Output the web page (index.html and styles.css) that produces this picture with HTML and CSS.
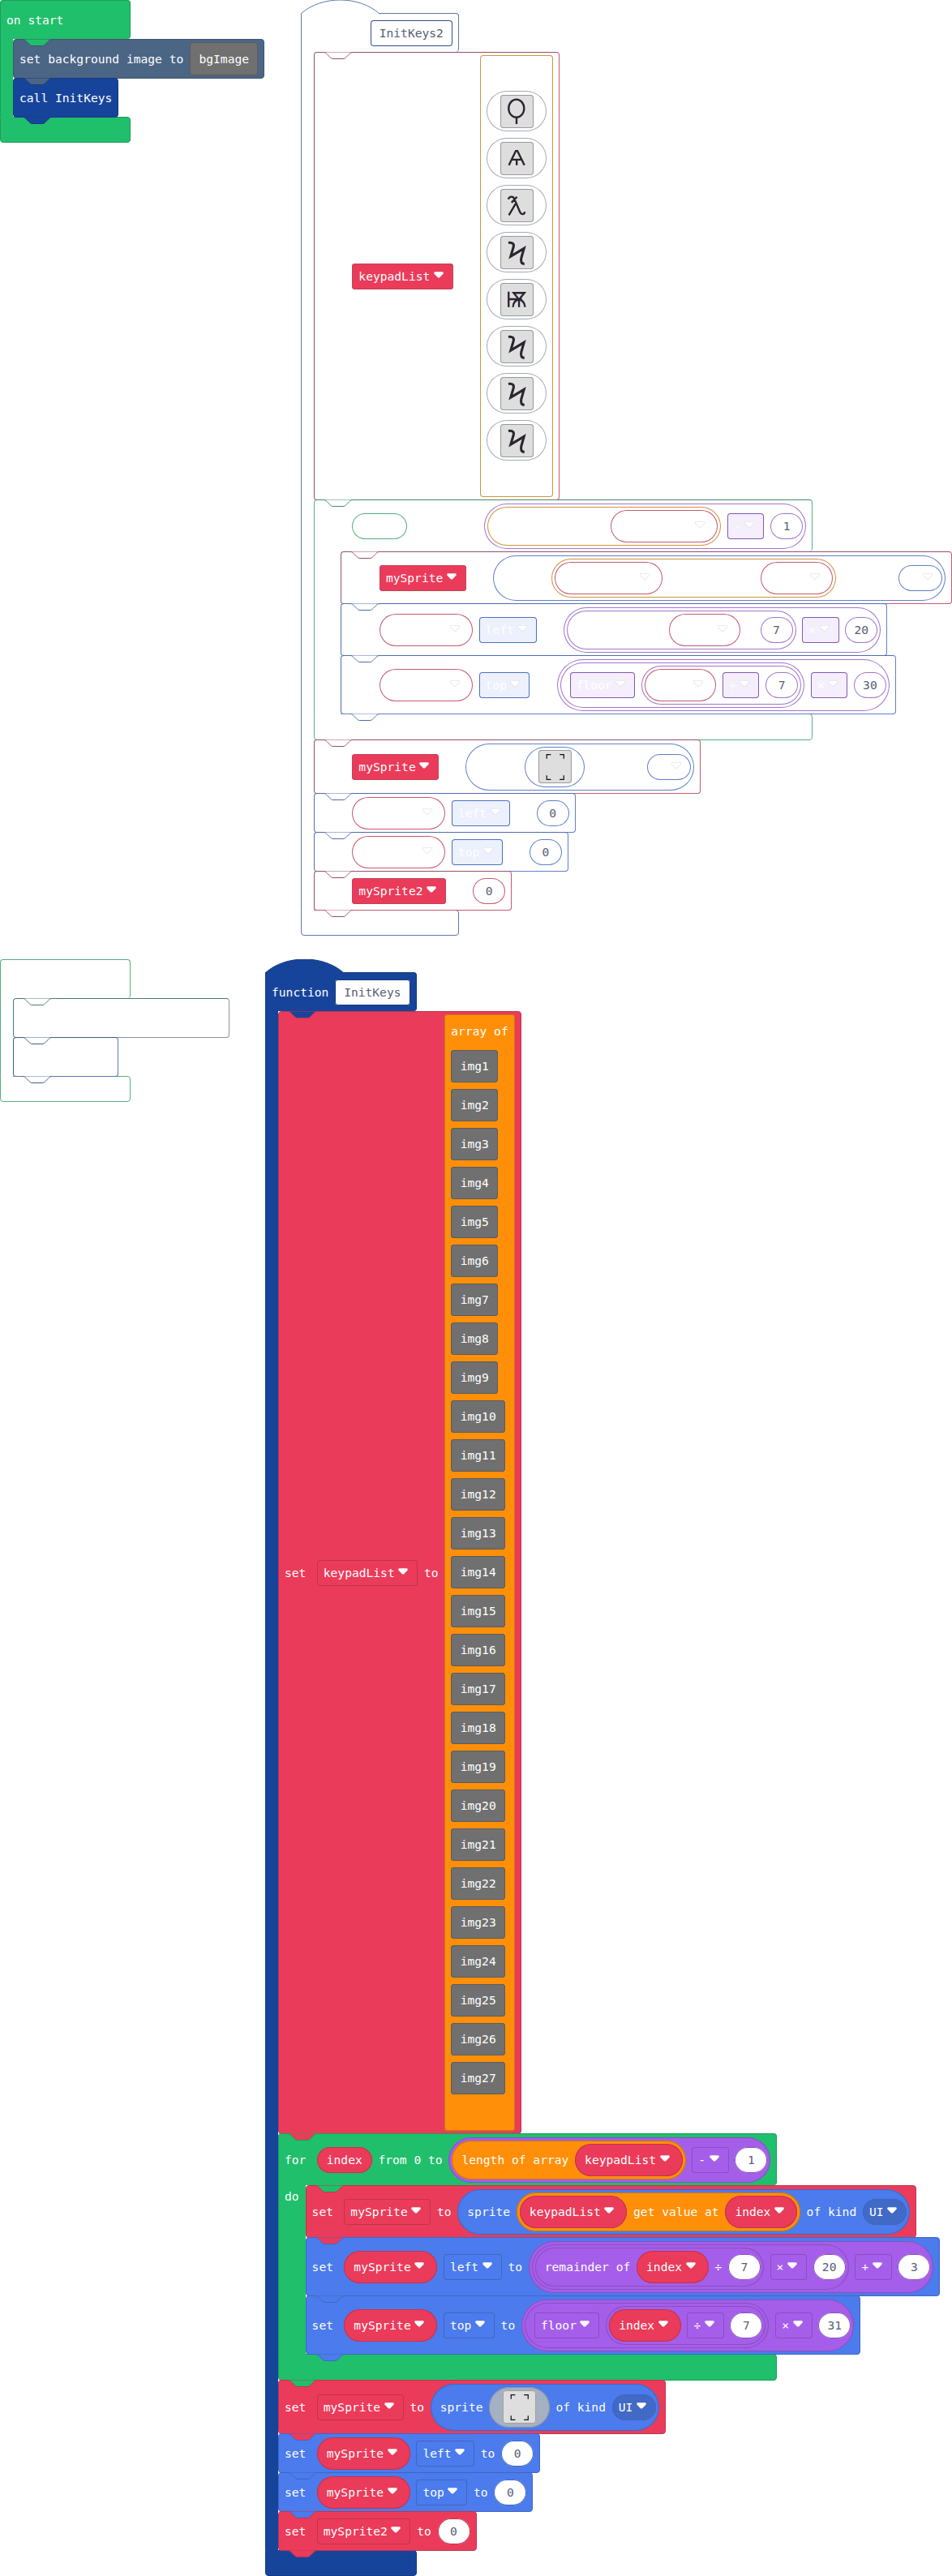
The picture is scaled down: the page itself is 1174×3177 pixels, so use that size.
FILE: index.html
```html
<!DOCTYPE html>
<html lang="en">
<head>
<meta charset="utf-8">
<title>Blocks workspace</title>
<link rel="stylesheet" href="styles.css">
</head>
<body>
<svg class="defs" aria-hidden="true">
  <symbol id="notch" viewBox="0 0 36 10"><path d="M0 .5c2 0 3 1 4 2l4 4c1 1 2 2 4 2h12c2 0 3-1 4-2l4-4c1-1 2-2 4-2"/></symbol>
  <symbol id="hat" viewBox="0 0 98 18"><path d="M.5 17.5v-1c25-22 71-22 96 0l1 1"/></symbol>
  <symbol id="v" viewBox="0 0 12 8"><path d="M1.5.2h9q1.200 0 1.200 1.200v.8q0 .5-.5.9l-4.100 4.100q-1.100.8-2.200 0l-4.100-4.100Q.3 2.700.3 2.200v-.8Q.3.2 1.500.2z"/></symbol>
  <symbol id="g-koppa" viewBox="0 0 40 40"><ellipse cx="19.300" cy="16.300" rx="9.300" ry="10.800"/><path d="M19.500 27v8"/></symbol>
  <symbol id="g-tent" viewBox="0 0 40 40"><path d="M10.300 28 18.600 11h2L29 28M14 21.300h11.500M19.700 21v7"/></symbol>
  <symbol id="g-lambda" viewBox="0 0 40 40"><path d="M9.700 12.500c.8-3.500 5.500-4.500 7.200-.5l6.600 15.500c1.200 3.300 5 4.300 6 0M10.300 31.500 18.300 18M13.500 16.500 20 9.500"/></symbol>
  <symbol id="g-bolt" viewBox="0 0 40 40"><path class="fat" d="M9.700 8.200c5-.8 7.300 1.500 6 5.500L12.500 24.500 28.500 15l-3.300 11.500c-.9 4.500.2 7 3.800 7"/></symbol>
  <symbol id="g-zhe" viewBox="0 0 40 40"><path d="M10 10.500v18.500M10 19.500h16M16 12h13l-6.500 8zM22.500 18v11M15.200 29c.3-5 3-8.500 7.300-9 4 .5 6.700 4 7.200 9"/></symbol>
  <symbol id="g-frame" viewBox="0 0 40 40"><path class="thin" d="M10 10.500V5.500h5M25.500 5.500h5v5M10 30.500v5h5M25.500 35.500h5v-5"/></symbol>
</svg>

<main class="workspace">

  <section class="script start">
    <div class="c green">
      <div class="head"><span>on start</span></div>
      <div class="body"><div class="arm"></div>
        <div class="rows">
          <div class="row slate over-green"><svg class="notch"><use href="#notch"/></svg><span>set background image to</span><span class="img">bgImage</span></div>
          <div class="row navy over-slate"><svg class="notch"><use href="#notch"/></svg><span>call InitKeys</span><svg class="notch tail"><use href="#notch"/></svg></div>
        </div>
      </div>
      <div class="foot"></div>
    </div>
  </section>

  <section class="script func2 ghost">
    <svg class="hat navy"><use href="#hat"/></svg>
    <div class="c navy hatted">
      <div class="head"><span class="b8"></span><span class="name">InitKeys2</span></div>
      <div class="body"><div class="arm"></div>
        <div class="rows">
          <div class="row red list8"><svg class="notch"><use href="#notch"/></svg><span class="lead"></span><span class="dd solid">keypadList<svg class="v"><use href="#v"/></svg></span><span class="b2"></span>
            <div class="array orange">
              <span class="title b8"></span>
              <div class="sprite"><svg><use href="#g-koppa"/></svg></div>
              <div class="sprite"><svg><use href="#g-tent"/></svg></div>
              <div class="sprite"><svg><use href="#g-lambda"/></svg></div>
              <div class="sprite"><svg><use href="#g-bolt"/></svg></div>
              <div class="sprite"><svg><use href="#g-zhe"/></svg></div>
              <div class="sprite"><svg><use href="#g-bolt"/></svg></div>
              <div class="sprite"><svg><use href="#g-bolt"/></svg></div>
              <div class="sprite"><svg><use href="#g-bolt"/></svg></div>
            </div>
          </div>
          <div class="c green loop"><svg class="notch"><use href="#notch"/></svg>
            <div class="head"><span class="lead"></span><span class="var plain green"><span class="b5"></span></span><span class="b9"></span>
              <span class="pill purple"><span class="pill orange txt"><span class="b15"></span><span class="var red"><span class="b10"></span><svg class="v"><use href="#v"/></svg></span></span><span class="dd tint">-<svg class="v"><use href="#v"/></svg></span><span class="num">1</span></span>
            </div>
            <div class="body"><div class="arm"></div>
              <div class="rows">
                <div class="row red h64"><svg class="notch"><use href="#notch"/></svg><span class="lead"></span><span class="dd solid">mySprite<svg class="v"><use href="#v"/></svg></span><span class="b2"></span>
                  <span class="pill blue txt"><span class="b6"></span><span class="pill orange"><span class="var red"><span class="b10"></span><svg class="v"><use href="#v"/></svg></span><span class="b12"></span><span class="var red"><span class="b5"></span><svg class="v"><use href="#v"/></svg></span></span><span class="b7"></span><span class="dd kind"><span class="b2"></span><svg class="v"><use href="#v"/></svg></span></span></div>
                <div class="row blue h64"><svg class="notch"><use href="#notch"/></svg><span class="lead"></span><span class="var red"><span class="b8"></span><svg class="v"><use href="#v"/></svg></span><span class="dd tint">left<svg class="v"><use href="#v"/></svg></span><span class="b2"></span>
                  <span class="pill purple"><span class="pill purple txt"><span class="b12"></span><span class="var red"><span class="b5"></span><svg class="v"><use href="#v"/></svg></span><span class="b1"></span><span class="num">7</span></span><span class="dd tint">×<svg class="v"><use href="#v"/></svg></span><span class="num">20</span></span></div>
                <div class="row blue h72"><svg class="notch"><use href="#notch"/></svg><span class="lead"></span><span class="var red"><span class="b8"></span><svg class="v"><use href="#v"/></svg></span><span class="dd tint">top<svg class="v"><use href="#v"/></svg></span><span class="b2"></span>
                  <span class="pill purple"><span class="pill purple txt"><span class="dd tint">floor<svg class="v"><use href="#v"/></svg></span><span class="pill purple"><span class="var red"><span class="b5"></span><svg class="v"><use href="#v"/></svg></span><span class="dd tint">÷<svg class="v"><use href="#v"/></svg></span><span class="num">7</span></span></span><span class="dd tint">×<svg class="v"><use href="#v"/></svg></span><span class="num">30</span></span><svg class="notch tail"><use href="#notch"/></svg></div>
              </div>
            </div>
            <div class="foot"></div>
          </div>
          <div class="row red h66"><svg class="notch"><use href="#notch"/></svg><span class="lead"></span><span class="dd solid">mySprite<svg class="v"><use href="#v"/></svg></span><span class="b2"></span>
            <span class="pill blue txt"><span class="b6"></span><span class="sprite"><svg><use href="#g-frame"/></svg></span><span class="b7"></span><span class="dd kind"><span class="b2"></span><svg class="v"><use href="#v"/></svg></span></span></div>
          <div class="row blue"><svg class="notch"><use href="#notch"/></svg><span class="lead"></span><span class="var red"><span class="b8"></span><svg class="v"><use href="#v"/></svg></span><span class="dd tint">left<svg class="v"><use href="#v"/></svg></span><span class="b2"></span><span class="num">0</span></div>
          <div class="row blue"><svg class="notch"><use href="#notch"/></svg><span class="lead"></span><span class="var red"><span class="b8"></span><svg class="v"><use href="#v"/></svg></span><span class="dd tint">top<svg class="v"><use href="#v"/></svg></span><span class="b2"></span><span class="num">0</span></div>
          <div class="row red"><svg class="notch"><use href="#notch"/></svg><span class="lead"></span><span class="dd solid">mySprite2<svg class="v"><use href="#v"/></svg></span><span class="b2"></span><span class="num">0</span><svg class="notch tail"><use href="#notch"/></svg></div>
        </div>
      </div>
      <div class="foot"></div>
    </div>
  </section>

  <section class="script empty ghost">
    <div class="c green">
      <div class="head"></div>
      <div class="body"><div class="arm"></div>
        <div class="rows">
          <div class="row slate wide"><svg class="notch"><use href="#notch"/></svg></div>
          <div class="row navy"><svg class="notch"><use href="#notch"/></svg><span class="b13"></span><svg class="notch tail"><use href="#notch"/></svg></div>
        </div>
      </div>
      <div class="foot"></div>
    </div>
  </section>

  <section class="script func1">
    <svg class="hat navy"><use href="#hat"/></svg>
    <div class="c navy hatted">
      <div class="head"><span>function</span><span class="name">InitKeys</span></div>
      <div class="body"><div class="arm"></div>
        <div class="rows">
          <div class="row red over-navy list27"><svg class="notch"><use href="#notch"/></svg><span class="lead">set</span><span class="dd">keypadList<svg class="v"><use href="#v"/></svg></span><span>to</span>
            <div class="array orange">
              <span class="title">array of</span>
              <span class="img">img1</span><span class="img">img2</span><span class="img">img3</span>
              <span class="img">img4</span><span class="img">img5</span><span class="img">img6</span>
              <span class="img">img7</span><span class="img">img8</span><span class="img">img9</span>
              <span class="img">img10</span><span class="img">img11</span><span class="img">img12</span>
              <span class="img">img13</span><span class="img">img14</span><span class="img">img15</span>
              <span class="img">img16</span><span class="img">img17</span><span class="img">img18</span>
              <span class="img">img19</span><span class="img">img20</span><span class="img">img21</span>
              <span class="img">img22</span><span class="img">img23</span><span class="img">img24</span>
              <span class="img">img25</span><span class="img">img26</span><span class="img">img27</span>
            </div>
          </div>
          <div class="c green loop over-red"><svg class="notch"><use href="#notch"/></svg>
            <div class="head"><span class="lead">for</span><span class="var plain red">index</span><span>from 0 to</span>
              <span class="pill purple"><span class="pill orange txt"><span>length of array</span><span class="var red">keypadList<svg class="v"><use href="#v"/></svg></span></span><span class="dd">-<svg class="v"><use href="#v"/></svg></span><span class="num">1</span></span>
            </div>
            <div class="body"><div class="arm">do</div>
              <div class="rows">
                <div class="row red over-green h64"><svg class="notch"><use href="#notch"/></svg><span class="lead">set</span><span class="dd">mySprite<svg class="v"><use href="#v"/></svg></span><span>to</span>
                  <span class="pill blue txt"><span>sprite</span><span class="pill orange"><span class="var red">keypadList<svg class="v"><use href="#v"/></svg></span><span>get value at</span><span class="var red">index<svg class="v"><use href="#v"/></svg></span></span><span>of kind</span><span class="dd kind">UI<svg class="v"><use href="#v"/></svg></span></span></div>
                <div class="row blue over-red h72"><svg class="notch"><use href="#notch"/></svg><span class="lead">set</span><span class="var red">mySprite<svg class="v"><use href="#v"/></svg></span><span class="dd">left<svg class="v"><use href="#v"/></svg></span><span>to</span>
                  <span class="pill purple"><span class="pill purple"><span class="pill purple txt"><span>remainder of</span><span class="var red">index<svg class="v"><use href="#v"/></svg></span><span>÷</span><span class="num">7</span></span><span class="dd">×<svg class="v"><use href="#v"/></svg></span><span class="num">20</span></span><span class="dd">+<svg class="v"><use href="#v"/></svg></span><span class="num">3</span></span></div>
                <div class="row blue over-blue h72"><svg class="notch"><use href="#notch"/></svg><span class="lead">set</span><span class="var red">mySprite<svg class="v"><use href="#v"/></svg></span><span class="dd">top<svg class="v"><use href="#v"/></svg></span><span>to</span>
                  <span class="pill purple"><span class="pill purple txt"><span class="dd">floor<svg class="v"><use href="#v"/></svg></span><span class="pill purple"><span class="var red">index<svg class="v"><use href="#v"/></svg></span><span class="dd">÷<svg class="v"><use href="#v"/></svg></span><span class="num">7</span></span></span><span class="dd">×<svg class="v"><use href="#v"/></svg></span><span class="num">31</span></span><svg class="notch tail"><use href="#notch"/></svg></div>
              </div>
            </div>
            <div class="foot"></div>
          </div>
          <div class="row red over-green h66"><svg class="notch"><use href="#notch"/></svg><span class="lead">set</span><span class="dd">mySprite<svg class="v"><use href="#v"/></svg></span><span>to</span>
            <span class="pill blue txt"><span>sprite</span><span class="sprite"><svg><use href="#g-frame"/></svg></span><span>of kind</span><span class="dd kind">UI<svg class="v"><use href="#v"/></svg></span></span></div>
          <div class="row blue over-red"><svg class="notch"><use href="#notch"/></svg><span class="lead">set</span><span class="var red">mySprite<svg class="v"><use href="#v"/></svg></span><span class="dd">left<svg class="v"><use href="#v"/></svg></span><span>to</span><span class="num">0</span></div>
          <div class="row blue over-blue"><svg class="notch"><use href="#notch"/></svg><span class="lead">set</span><span class="var red">mySprite<svg class="v"><use href="#v"/></svg></span><span class="dd">top<svg class="v"><use href="#v"/></svg></span><span>to</span><span class="num">0</span></div>
          <div class="row red over-blue"><svg class="notch"><use href="#notch"/></svg><span class="lead">set</span><span class="dd">mySprite2<svg class="v"><use href="#v"/></svg></span><span>to</span><span class="num">0</span><svg class="notch tail"><use href="#notch"/></svg></div>
        </div>
      </div>
      <div class="foot"></div>
    </div>
  </section>

</main>
</body>
</html>
```
FILE: styles.css
```css
* { box-sizing: border-box; }
body { margin: 0; background: #fff; }
.defs { position: absolute; width: 0; height: 0; }

.workspace {
  --ch: 8.8px;
  --gap: 7.750px;
  position: relative;
  width: 1174px;
  height: 3177px;
  overflow: hidden;
  font: 14.617px/20px "DejaVu Sans Mono", monospace;
  color: #fff;
  white-space: nowrap;
}

/* scripts sit freely on the canvas */
.script { position: absolute; }
.start { left: 0; top: 0; }
.func2 { left: 370.600px; top: 0; }
.empty { left: 0; top: 1183px; }
.func1 { left: 327px; top: 1183px; }

/* block colours */
.green  { --fill: #20bf6b; --line: #1c9e5b; --dark: #1c9e5b; }
.slate  { --fill: #4b6584; --line: #40566f; --dark: #40566f; }
.navy   { --fill: #17449b; --line: #163a7e; --dark: #163a7e; }
.red    { --fill: #eb3b5a; --line: #bf3450; --dark: #bf3450; }
.orange { --fill: #ff8f08; --line: #cc7710; --dark: #cc7710; }
.purple { --fill: #a55eea; --line: #8850bd; --dark: #8850bd; }
.blue   { --fill: #4b7bec; --line: #4067bf; --dark: #4067bf; }
.over-green { --above: #20bf6b; }
.over-slate { --above: #4b6584; }
.over-navy  { --above: #17449b; }
.over-red   { --above: #eb3b5a; }
.over-blue  { --above: #4b7bec; }

/* outline-only scripts; --dark is used where two outlines coincide */
.ghost .green  { --fill: #fff; --line: #55ae80; --dark: #3f8a6a; }
.ghost .slate  { --fill: #fff; --line: #8a93a3; --dark: #4a7a72; }
.ghost .navy   { --fill: #fff; --line: #5c78ab; --dark: #3d6090; }
.ghost .red    { --fill: #fff; --line: #c65a70; --dark: #94506c; }
.ghost .orange { --fill: #fff; --line: #d09440; --dark: #d09440; }
.ghost .purple { --fill: #fff; --line: #a075cc; --dark: #a075cc; }
.ghost .blue   { --fill: #fff; --line: #5f80c8; --dark: #4f6cb2; }
.ghost .row, .ghost .loop { --above: #fff; }

/* wrapping blocks */
.c { display: flex; flex-direction: column; width: max-content; position: relative; }
.head {
  height: 48px;
  display: flex;
  align-items: center;
  gap: var(--gap);
  padding: 0 7px;
  background: var(--fill);
  border: 1px solid var(--line);
  border-bottom: 0;
  border-radius: 4px 4px 4px 0;
}
.start .head, .empty .head { width: 161px; }
.hatted > .head { border-top-left-radius: 0; }
.loop > .head { height: 64px; border-top-color: var(--dark); }
.body { display: flex; width: 0; }
.arm {
  flex: none;
  width: 16px;
  background: var(--fill);
  border-left: 1px solid var(--line);
}
.loop > .body > .arm { width: 33.6px; padding: 4px 0 0 7px; }
.foot {
  position: relative;
  height: 32px;
  background: var(--fill);
  border: 1px solid var(--line);
  border-radius: 0 4px 4px 4px;
}
/* joins the footer to the arm above it */
.foot::before {
  content: "";
  position: absolute;
  left: 0;
  top: -1px;
  width: 15px;
  height: 1px;
  background: var(--fill);
}
.loop > .foot::before { width: 32.600px; }
.loop { margin-bottom: -1px; }
.loop > .foot { height: 33px; }

/* statements */
.row {
  position: relative;
  height: 49px;
  margin-bottom: -1px;
  width: max-content;
  display: flex;
  align-items: center;
  gap: var(--gap);
  padding: 0 7px;
  background: var(--fill);
  border: 1px solid var(--line);
  border-top-color: var(--dark);
  border-left-color: var(--dark);
  border-radius: 4px;
}
.row:last-child { z-index: 1; }
.rows { margin-bottom: 0; }
.row.h64 { height: 65px; }
.row.h66 { height: 67px; }
.row.h72 { height: 73px; }
.list8 { height: 553px; }
.list27 { height: 1385px; }
.wide { width: 267px; }

.notch, .hat { display: block; fill: var(--above); stroke: var(--dark); stroke-width: 1; }
.notch { position: absolute; z-index: 2; left: 11px; top: -1px; width: 36px; height: 10px; }
.loop > .notch { left: 12px; top: 0; }
.notch.tail { top: calc(100% + 0px); fill: var(--fill); }
.hat { position: relative; z-index: 1; width: 98px; height: 18px; margin-bottom: -2px; fill: var(--fill); stroke: var(--line); }

/* labels and fields */
.lead { min-width: 32px; }
.dd, .var, .num, .img, .name {
  display: flex;
  align-items: center;
  height: 32px;
  box-shadow: inset 0 0 0 1px var(--line);
  border-radius: 4px;
}
.dd { padding: 0 12px 0 8px; }
.v { width: 12px; height: 8px; margin: -3px 0 0 4.500px; fill: #fff; overflow: visible; }
.var { height: 40px; border-radius: 20px; padding: 0 16px 0 12px; background: var(--fill); }
.var.plain { height: 32px; border-radius: 16px; padding: 0 12px; }
.num {
  width: 40px;
  border-radius: 16px;
  justify-content: center;
  background: #fff;
  color: #575e75;
}
.img {
  height: 41px;
  padding: 0 11.400px;
  background: #707070;
  box-shadow: inset 0 0 0 1px #5c5c5c;
}
.name { padding: 0 11px; background: #fff; color: #575e75; }
.kind { border-radius: 16px; background: #4169c6; }

.pill {
  display: flex;
  align-items: center;
  gap: var(--gap);
  padding: 4px;
  border-radius: 40px;
  background: var(--fill);
  box-shadow: inset 0 0 0 1px var(--line);
}
.pill.txt { padding-left: 12px; }

.array {
  align-self: stretch;
  margin: 3px 0;
  display: flex;
  flex-direction: column;
  align-items: flex-start;
  gap: 8px;
  padding: 0 8px;
  background: var(--fill);
  border-radius: 4px;
  box-shadow: inset 0 0 0 1px var(--line);
}
.array .img { height: 40px; }
.title { height: 36px; padding-top: 11px; }

.sprite {
  width: 74.400px;
  height: 50px;
  border-radius: 25px;
  display: flex;
  align-items: center;
  justify-content: center;
  background: #a5b1c2;
  box-shadow: inset 0 0 0 1px #8592ab;
}
.sprite svg {
  width: 41px;
  height: 41px;
  border-radius: 4px;
  background: #dedede;
  box-shadow: inset 0 0 0 1px #a2a2a2;
  fill: none;
  stroke: #2c242f;
  stroke-width: 2.300;
}
.fat { stroke-width: 3; }
.thin { stroke: #111; stroke-width: 1.200; }

.ghost .sprite { background: #fff; box-shadow: inset 0 0 0 1px #a0a9b8; }
.ghost .pill .sprite { box-shadow: inset 0 0 0 1px var(--line); }
.ghost .sprite svg { box-shadow: inset 0 0 0 1px #999; }
.ghost .kind { background: #fff; }
.ghost .solid { background: #eb3b5a; box-shadow: inset 0 0 0 1px #c4405a; }
.ghost .blue .tint { background: #edf1fd; box-shadow: inset 0 0 0 1px #4c70c0; }
.ghost .purple .tint { background: #f5effd; box-shadow: inset 0 0 0 1px #8455ba; }
.ghost .name { box-shadow: inset 0 0 0 1px #2e5090; }
.ghost .var .v, .ghost .tint .v, .ghost .kind .v { stroke: #dcdcdc; stroke-width: .8; }

/* empty labels, sized in characters */
.b1  { width: var(--ch); }
.b2  { width: calc(2 * var(--ch)); }
.b5  { width: calc(5 * var(--ch)); }
.b6  { width: calc(6 * var(--ch)); }
.b7  { width: calc(7 * var(--ch)); }
.b8  { width: calc(8 * var(--ch)); }
.b9  { width: calc(9 * var(--ch)); }
.b10 { width: calc(10 * var(--ch)); }
.b12 { width: calc(12 * var(--ch)); }
.b13 { width: calc(13 * var(--ch)); }
.b15 { width: calc(15 * var(--ch)); }
```
